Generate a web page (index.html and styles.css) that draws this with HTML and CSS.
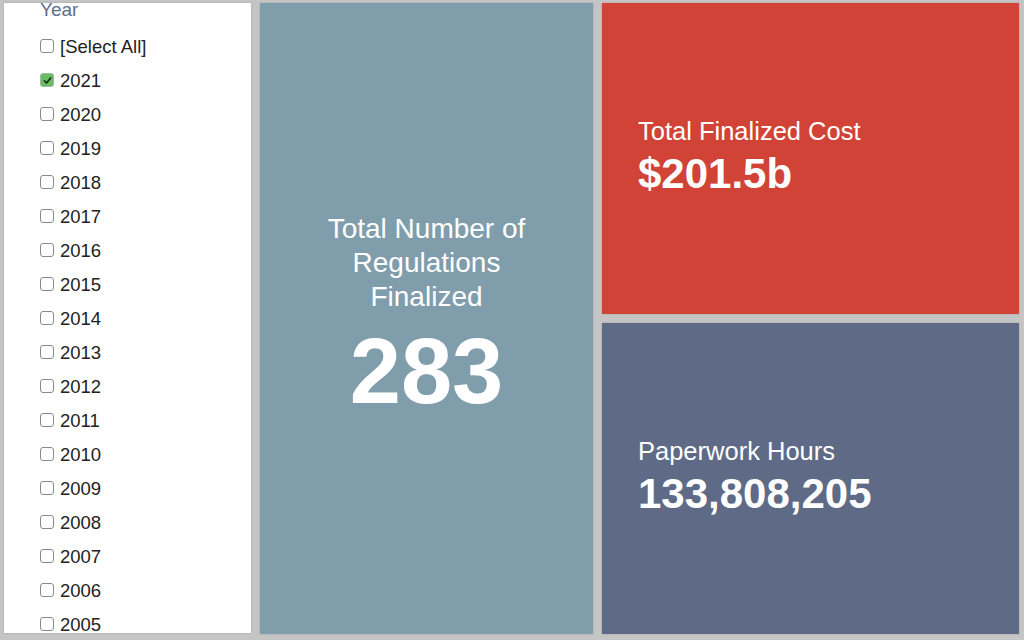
FILE: index.html
```html
<!DOCTYPE html>
<html lang="en">
<head>
<meta charset="utf-8">
<title>Regulations Dashboard</title>
<link rel="stylesheet" href="styles.css">
</head>
<body>
<div class="dash">
  <aside class="filter">
    <div class="filter-title">Year</div>
    <ul class="opts">
      <li class="opt"><span class="box"></span><span>[Select All]</span></li>
      <li class="opt"><span class="box checked"><svg viewBox="0 0 12 12" width="11" height="11"><path d="M2.6 6.3 L4.9 8.7 L9.4 3.2" fill="none" stroke="#1e2a1e" stroke-width="1.8" stroke-linecap="round" stroke-linejoin="round"/></svg></span><span>2021</span></li>
      <li class="opt"><span class="box"></span><span>2020</span></li>
      <li class="opt"><span class="box"></span><span>2019</span></li>
      <li class="opt"><span class="box"></span><span>2018</span></li>
      <li class="opt"><span class="box"></span><span>2017</span></li>
      <li class="opt"><span class="box"></span><span>2016</span></li>
      <li class="opt"><span class="box"></span><span>2015</span></li>
      <li class="opt"><span class="box"></span><span>2014</span></li>
      <li class="opt"><span class="box"></span><span>2013</span></li>
      <li class="opt"><span class="box"></span><span>2012</span></li>
      <li class="opt"><span class="box"></span><span>2011</span></li>
      <li class="opt"><span class="box"></span><span>2010</span></li>
      <li class="opt"><span class="box"></span><span>2009</span></li>
      <li class="opt"><span class="box"></span><span>2008</span></li>
      <li class="opt"><span class="box"></span><span>2007</span></li>
      <li class="opt"><span class="box"></span><span>2006</span></li>
      <li class="opt"><span class="box"></span><span>2005</span></li>
    </ul>
  </aside>
  <section class="card card-count">
    <div class="count-label">Total Number of Regulations Finalized</div>
    <div class="count-value">283</div>
  </section>
  <div class="stack">
    <section class="card card-cost">
      <div class="kpi-label">Total Finalized Cost</div>
      <div class="kpi-value">$201.5b</div>
    </section>
    <section class="card card-hours">
      <div class="kpi-label">Paperwork Hours</div>
      <div class="kpi-value">133,808,205</div>
    </section>
  </div>
</div>
</body>
</html>
```

FILE: styles.css
```css
* { box-sizing: border-box; }
html, body {
  margin: 0;
  padding: 0;
  width: 1024px;
  height: 640px;
  overflow: hidden;
  background: #c5c5c5;
  font-family: "Liberation Sans", Arial, Helvetica, sans-serif;
}
.dash {
  display: grid;
  grid-template-columns: 247px 333px 417px;
  column-gap: 9px;
  padding: 3px 5px 6px 4px;
  height: 640px;
}
.filter {
  background: #ffffff;
  height: 630px;
  overflow: hidden;
  padding-left: 36px;
  box-shadow: 0 0 2px rgba(0,0,0,0.18);
}
.filter-title {
  font-size: 19px;
  line-height: 20px;
  margin-top: -3px;
  color: #5b6f8e;
}
.opts {
  list-style: none;
  margin: 10px 0 0;
  padding: 0;
}
.opt {
  display: flex;
  align-items: center;
  height: 34px;
  font-size: 18.5px;
  color: #222;
  gap: 6px;
}
.box {
  width: 14px;
  height: 14px;
  border: 1px solid #8a8a8a;
  border-radius: 3px;
  background: #fff;
  display: flex;
  align-items: center;
  justify-content: center;
  flex: none;
  margin-top: -2px;
}
.box.checked {
  background: #66bd63;
  border-color: #9fb59f;
}
.card {
  color: #fff;
  box-shadow: 0 0 2px rgba(0,0,0,0.18);
}
.card-count {
  background: #809dab;
  height: 631px;
  display: flex;
  flex-direction: column;
  align-items: center;
  justify-content: center;
  text-align: center;
  padding-bottom: 8px;
}
.count-label {
  font-size: 28px;
  line-height: 34px;
  max-width: 230px;
}
.count-value {
  font-size: 92px;
  font-weight: bold;
  line-height: 92px;
  margin-top: 11px;
}
.stack {
  display: flex;
  flex-direction: column;
  gap: 9px;
}
.card-cost, .card-hours {
  height: 311px;
  display: flex;
  flex-direction: column;
  justify-content: center;
  padding: 0 0 5px 36px;
}
.card-cost { background: #d04336; }
.card-hours { background: #5e6a86; }
.kpi-label {
  font-size: 25.5px;
  line-height: 30px;
}
.kpi-value {
  font-size: 42px;
  font-weight: bold;
  line-height: 44px;
  margin-top: 6px;
}
```
